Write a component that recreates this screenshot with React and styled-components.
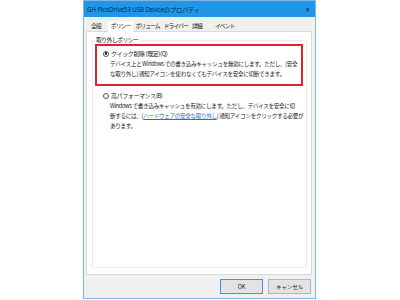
import React from "react";
import styled, { createGlobalStyle } from "styled-components";

const Global = createGlobalStyle`
  html, body { margin: 0; padding: 0; background: #ffffff; }
  body {
    font-family: "Noto Sans CJK JP", "Noto Sans", sans-serif;
    color: #1a1a1a;
  }
`;

const tabs = ["全般", "ポリシー", "ボリューム", "ドライバー", "詳細", "イベント"];

const App = () => {
  return (
    <>
      <Global />
      <Page>
        <Window>
          <TitleBar>
            <span>GH PicoDrive53 USB Deviceのプロパティ</span>
            <Close>×</Close>
          </TitleBar>
          <Body>
            <TabRow>
              {tabs.map((t, i) => (
                <Tab key={t} active={i === 1}>
                  {t}
                </Tab>
              ))}
            </TabRow>
            <Panel>
              <GroupBox>
                <Legend>取り外しポリシー</Legend>
                <Highlight>
                  <Option>
                    <Radio checked />
                    <span>クイック削除 (既定)(Q)</span>
                  </Option>
                  <Desc>
                    デバイス上と Windows での書き込みキャッシュを無効にします。ただし、[安全
                    <br />
                    な取り外し] 通知アイコンを使わなくてもデバイスを安全に切断できます。
                  </Desc>
                </Highlight>
                <Plain>
                  <Option>
                    <Radio />
                    <span>高パフォーマンス(B)</span>
                  </Option>
                  <Desc>
                    Windows で書き込みキャッシュを有効にします。ただし、デバイスを安全に切
                    <br />
                    断するには、[<Link>ハードウェアの安全な取り外し</Link>] 通知アイコンをクリックする必要が
                    <br />
                    あります。
                  </Desc>
                </Plain>
              </GroupBox>
            </Panel>
            <Footer>
              <Button primary>OK</Button>
              <Button>キャンセル</Button>
            </Footer>
          </Body>
        </Window>
      </Page>
    </>
  );
};

const Page = styled.div`
  width: 400px;
  height: 300px;
  display: flex;
  padding-left: 83px;
  box-sizing: border-box;
`;

const Window = styled.div`
  width: 233px;
  height: 299px;
  border: 1px solid #7fb6e2;
  box-sizing: border-box;
  background: #f0f0f0;
  display: flex;
  flex-direction: column;
`;

const TitleBar = styled.div`
  height: 16px;
  background: #2196e8;
  display: flex;
  align-items: center;
  justify-content: space-between;
  padding: 0 5px 0 3px;
  font-family: "Noto Sans", "Noto Sans CJK JP", sans-serif;
  font-size: 6.2px;
  color: #0d2a44;
  letter-spacing: -0.1px;
`;

const Close = styled.span`
  font-size: 8px;
  color: #10324f;
`;

const Body = styled.div`
  flex: 1;
  display: flex;
  flex-direction: column;
  padding: 3px 3px 0 2px;
`;

const TabRow = styled.div`
  display: flex;
  height: 11px;
  align-items: flex-end;
  padding-left: 3px;
`;

const Tab = styled.div`
  font-size: 5.8px;
  line-height: 10px;
  height: ${(p) => (p.active ? "11px" : "10px")};
  padding: 0 ${(p) => (p.active ? "3px" : "1px")};
  margin: ${(p) => (p.active ? "0 0 0 5px" : "0 1px")};
  background: ${(p) => (p.active ? "#ffffff" : "transparent")};
  color: #1a1a1a;
  letter-spacing: -0.9px;
  position: relative;
  top: ${(p) => (p.active ? "1px" : "0")};
  &:nth-child(5) {
    margin-right: 10px;
  }
`;

const Panel = styled.div`
  height: 244px;
  background: #ffffff;
  border: 1px solid #dadada;
  box-sizing: border-box;
  padding: 8px 4px 4px 5px;
`;

const GroupBox = styled.div`
  position: relative;
  height: 228px;
  border: 1px solid #ececec;
  box-sizing: border-box;
  padding: 3px 3px 0 2px;
`;

const Legend = styled.span`
  position: absolute;
  top: -5px;
  left: 2px;
  background: #ffffff;
  padding: 0 1px;
  font-size: 5.8px;
  line-height: 8px;
  letter-spacing: -0.5px;
`;

const Highlight = styled.div`
  height: 42px;
  border: 2px solid #d8262d;
  box-sizing: border-box;
  padding: 3px 0 0 6px;
`;

const Plain = styled.div`
  padding: 5px 0 0 8px;
`;

const Option = styled.div`
  display: flex;
  align-items: center;
  gap: 2px;
  font-size: 6px;
  line-height: 9px;
  letter-spacing: -0.4px;
`;

const Radio = styled.span`
  width: 6px;
  height: 6px;
  border: 1px solid #555;
  border-radius: 50%;
  box-sizing: border-box;
  display: inline-flex;
  align-items: center;
  justify-content: center;
  background: #ffffff;
  &::after {
    content: "";
    width: 2.4px;
    height: 2.4px;
    border-radius: 50%;
    background: ${(p) => (p.checked ? "#222" : "transparent")};
  }
`;

const Desc = styled.div`
  margin: 1px 0 0 7px;
  font-size: 5.6px;
  line-height: 10px;
  letter-spacing: -0.33px;
  white-space: nowrap;
`;

const Link = styled.span`
  color: #2a6fc4;
  text-decoration: underline;
`;

const Footer = styled.div`
  flex: 1;
  display: flex;
  justify-content: flex-end;
  align-items: center;
  gap: 5px;
  padding-right: 1px;
`;

const Button = styled.div`
  width: 43px;
  height: 15px;
  box-sizing: border-box;
  border: 1px solid ${(p) => (p.primary ? "#4a90cf" : "#b5b5b5")};
  background: #e3e3e3;
  display: flex;
  align-items: center;
  justify-content: center;
  font-size: 5.6px;
  letter-spacing: -0.2px;
`;

export default App;
